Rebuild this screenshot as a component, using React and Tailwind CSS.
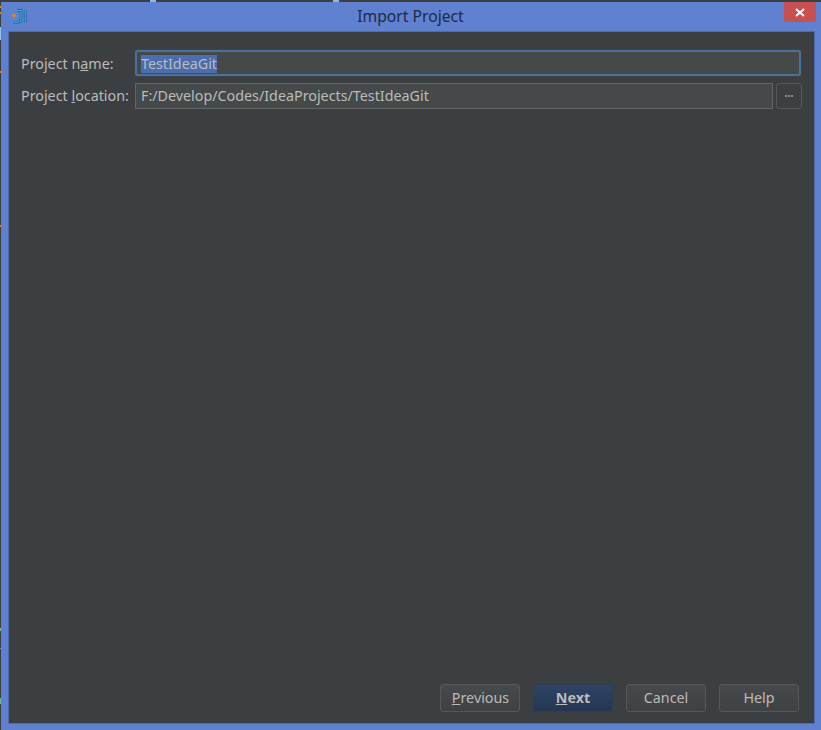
export default function App() {
  const btn = "w-20 h-[28px] rounded-[3px] border border-[#555859] bg-gradient-to-b from-[#47494b] to-[#3f4244] text-[#bbbbbb] text-[14.3px] flex items-center justify-center";
  return (
    <div className="relative w-[821px] h-[730px] bg-[#5f81cf] flex flex-col overflow-hidden" style={{ fontFamily: '"Noto Sans", "Open Sans", sans-serif' }}>
      <div className="absolute left-0 top-0 w-[1px] h-[730px] bg-[#3c3f41] flex flex-col">
        <div className="mt-[6px] h-[2px] bg-[#d9822b]" />
        <div className="mt-[4px] h-[2px] bg-[#d9822b]" />
        <div className="mt-[13px] h-[13px] bg-[#8fc4ea]" />
        <div className="mt-[31px] h-[2px] bg-[#d9822b]" />
        <div className="mt-[152px] h-[2px] bg-[#d9822b]" />
        <div className="mt-[401px] h-[3px] bg-[#6fb5a8]" />
        <div className="mt-[17px] h-[1px] bg-[#5f8fc0]" />
        <div className="mt-[49px] h-[6px] bg-[#6fb5a8]" />
      </div>
      <div className="h-[2px] bg-[#3c3f41] flex">
        <div className="ml-[150px] w-[6px] bg-[#8fb8dc]" />
        <div className="ml-[177px] w-[6px] bg-[#8fb8dc]" />
      </div>
      <div className="h-[29px] flex relative items-start">
        <svg className="absolute left-[11px] top-[7px]" width="16" height="15" viewBox="0 0 16 15" fill="none">
          <circle cx="3" cy="6.5" r="1.9" fill="#d9822b" />
          <path d="M6 1.5 H10 V10 C10 12.5 8.5 13.2 6 13.2 H2.5" stroke="#17548c" strokeWidth="2.6" />
          <path d="M14.2 1 V13.5" stroke="#17548c" strokeWidth="2.6" />
          <path d="M6 1.5 H10 V10 C10 12.5 8.5 13.2 6 13.2 H2.5" stroke="#35bde6" strokeWidth="1.2" />
          <path d="M14.2 1 V13.5" stroke="#35bde6" strokeWidth="1.2" />
        </svg>
        <div className="flex-1 text-center text-[15.7px] leading-[28px] text-[#1e2a4a]">Import Project</div>
        <div className="absolute left-[784px] top-0 w-[32px] h-[20px] bg-[#c75050] flex items-center justify-center">
          <svg width="10" height="9" viewBox="0 0 10 9"><path d="M1 1 L9 8 M9 1 L1 8" stroke="#fff" strokeWidth="2" /></svg>
        </div>
      </div>
      <div className="ml-[8px] mr-[6px] h-[693px] border border-[#4f6ba8] bg-[#3c3f41] flex flex-col pl-[12px] pr-[12px] pt-[18px] pb-[11px] text-[#bbbbbb] text-[14.3px]">
        <div className="flex items-center h-[26px] mb-[7px]">
          <div className="w-[114px] shrink-0 whitespace-nowrap pt-[2px]">Project n<span className="underline">a</span>me:</div>
          <div className="w-[666px] h-[26px] rounded-[3px] border-2 border-[#4a7198] bg-[#45494a] flex items-center pl-[4px] pt-[1px] shadow-[0_0_1px_#4a7198]">
            <span className="bg-[#4b6eaf] text-[#bbbbbb] leading-[18px]">TestIdeaGit</span>
          </div>
        </div>
        <div className="flex items-center h-[26px]">
          <div className="w-[114px] shrink-0 whitespace-nowrap">Project <span className="underline">l</span>ocation:</div>
          <div className="w-[638px] h-[26px] border border-[#646464] bg-[#45494a] flex items-center pl-[5px]">F:/Develop/Codes/IdeaProjects/TestIdeaGit</div>
          <div className="ml-[3px] w-[26px] h-[26px] rounded-[3px] border border-[#555859] flex items-center justify-center gap-[1px]">
            <span className="w-[2px] h-[2px] bg-[#8a8a8a]" /><span className="w-[2px] h-[2px] bg-[#8a8a8a]" /><span className="w-[2px] h-[2px] bg-[#8a8a8a]" />
          </div>
        </div>
        <div className="flex-1" />
        <div className="flex justify-end gap-[13px] pr-[3px]">
          <div className={btn}><span className="pl-[1px]"><span className="underline">P</span>revious</span></div>
          <div className="w-20 h-[28px] rounded-[3px] border border-[#2e3d54] bg-gradient-to-b from-[#2f4568] to-[#243650] text-[#bbbbbb] text-[14.3px] font-bold flex items-center justify-center"><span><span className="underline">N</span>ext</span></div>
          <div className={btn}>Cancel</div>
          <div className={btn}>Help</div>
        </div>
      </div>
    </div>
  );
}
